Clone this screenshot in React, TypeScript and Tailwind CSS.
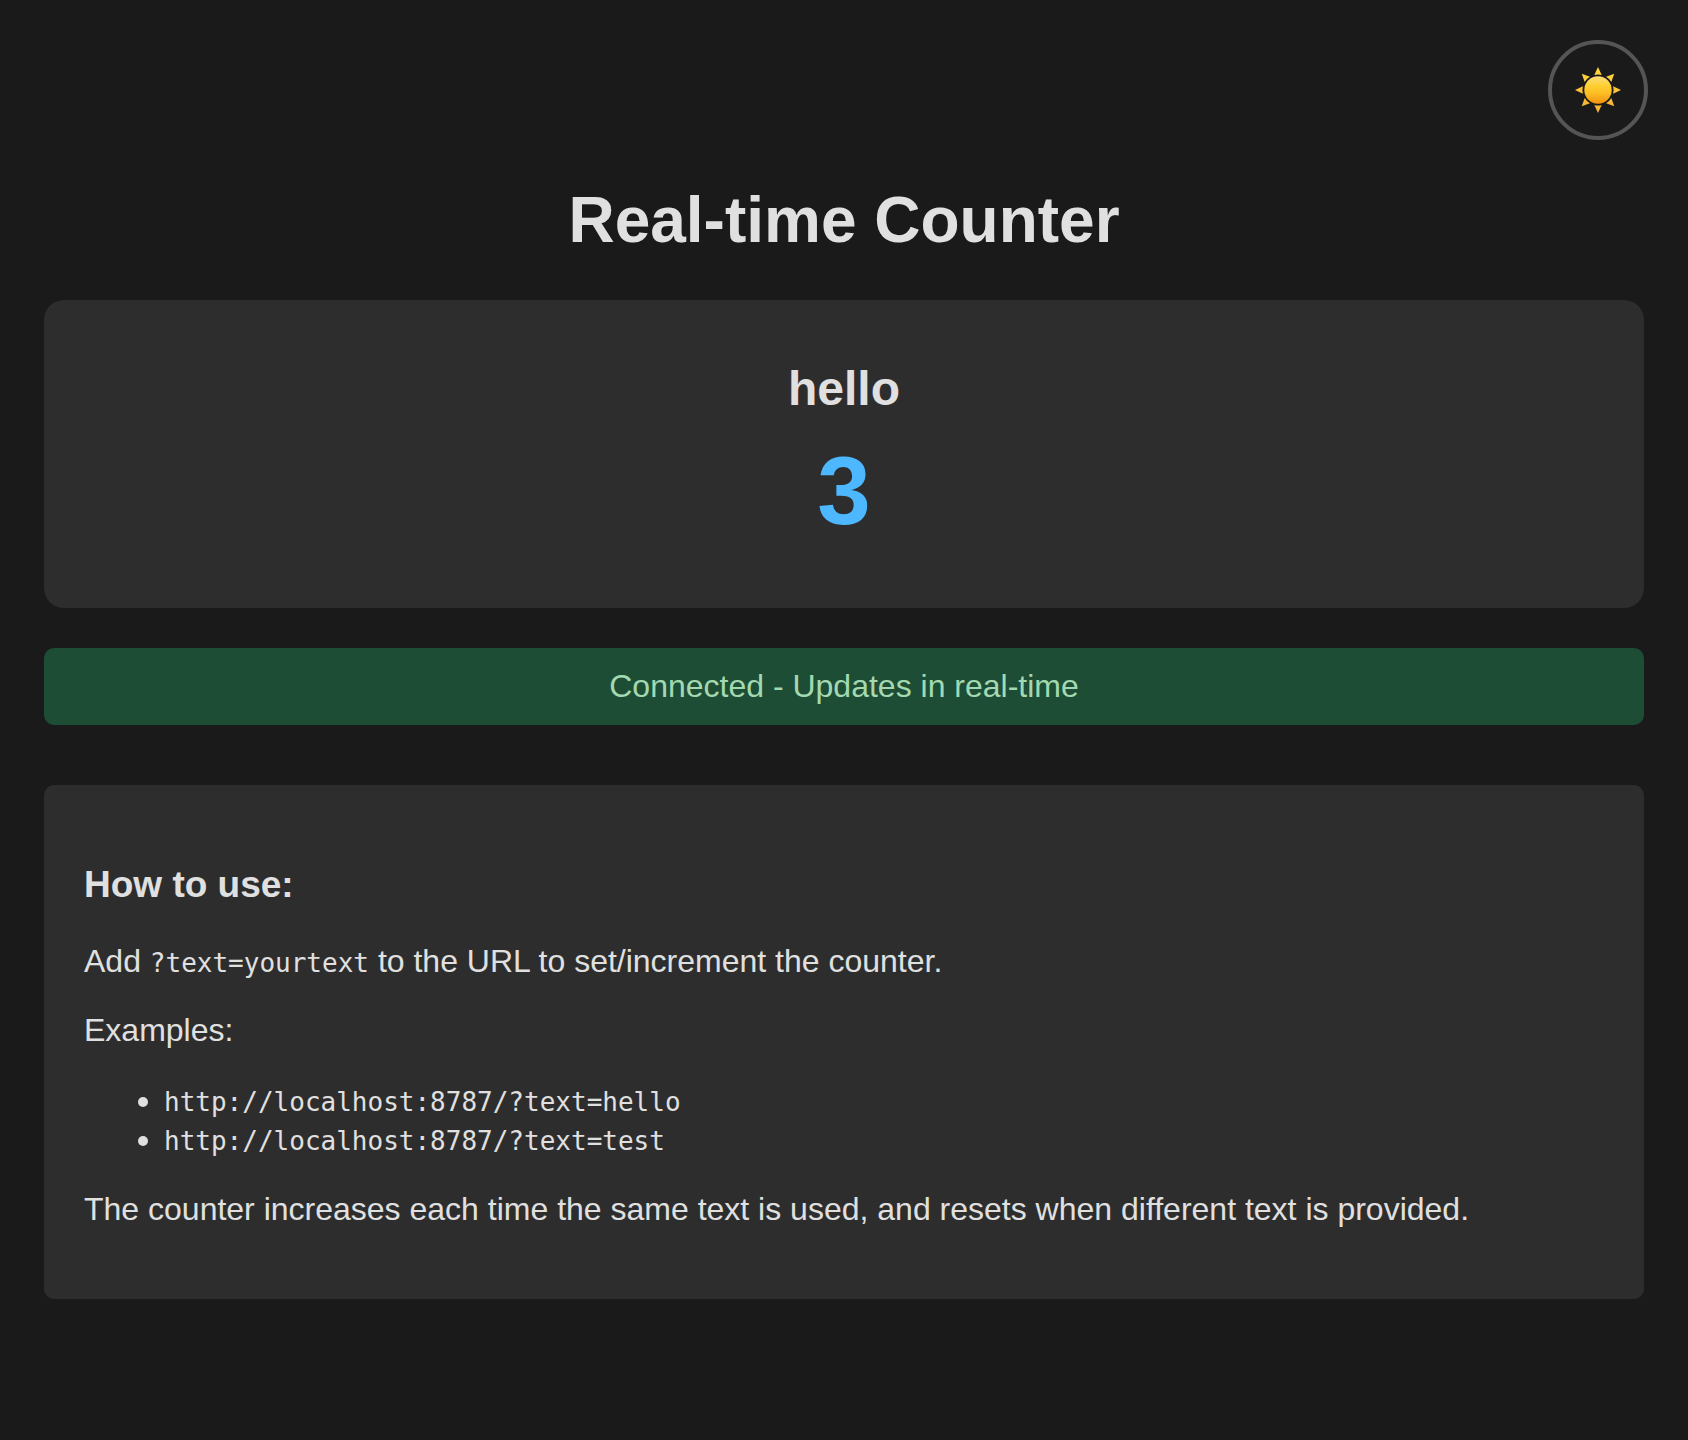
import { useState } from "react";

const rays = [0, 45, 90, 135, 180, 225, 270, 315];

function Sun() {
  return (
    <svg viewBox="0 0 48 48" className="size-12" aria-hidden="true">
      <defs>
        <linearGradient id="disc" x1="0" y1="0" x2="0" y2="1">
          <stop offset="0" stopColor="#fddc78" />
          <stop offset="0.15" stopColor="#fdd75c" />
          <stop offset="0.35" stopColor="#fecf30" />
          <stop offset="0.6" stopColor="#fdc024" />
          <stop offset="1" stopColor="#f3920f" />
        </linearGradient>
        <linearGradient id="rays" gradientUnits="userSpaceOnUse" x1="0" y1="1" x2="0" y2="47">
          <stop offset="0" stopColor="#ffd83c" />
          <stop offset="1" stopColor="#f9ae34" />
        </linearGradient>
        <clipPath id="ray-shape">
          {rays.map((a) => (
            <path key={a} d="M24 1 L27.7 8.9 Q24 7.9 20.3 8.9 Z" transform={`rotate(${a} 24 24)`} />
          ))}
        </clipPath>
      </defs>
      <rect width="48" height="48" fill="url(#rays)" clipPath="url(#ray-shape)" />
      <circle cx="24" cy="24" r="13.7" fill="url(#disc)" />
    </svg>
  );
}

const examples = ["http://localhost:8787/?text=hello", "http://localhost:8787/?text=test"];

export default function App() {
  const [count] = useState(3);
  return (
    <div className="min-h-screen bg-[#1a1a1a] px-11 pt-10 pb-10 font-['Liberation_Sans',Arial,sans-serif] text-[32px] leading-[37px] text-[#e0e0e0]">
      <header className="-mr-1 flex justify-end">
        <button type="button" aria-label="Toggle theme" className="flex size-[100px] items-center justify-center rounded-full border-4 border-[#555555]">
          <Sun />
        </button>
      </header>
      <main>
        <h1 className="mt-11 text-center text-[64px] leading-[72px] font-bold">Real-time Counter</h1>
        <section className="mt-11 flex flex-col items-center rounded-[20px] bg-[#2d2d2d] px-10 pt-15 pb-[62px] text-center">
          <h2 className="text-5xl leading-[58px] font-bold">hello</h2>
          <output className="mt-[18px] text-8xl leading-[110px] font-bold text-[#4db8ff]">{count}</output>
        </section>
        <p role="status" className="mt-10 rounded-[10px] bg-[#1e4d35] p-5 text-center text-[#a3d9b1]">Connected - Updates in real-time</p>
        <section className="mt-15 rounded-[10px] bg-[#2d2d2d] px-10 pt-[78px] pb-[71px]">
          <h3 className="text-[37px] leading-[43px] font-bold">How to use:</h3>
          <p className="mt-[37px]">
            Add <code className="font-['DejaVu_Sans_Mono',monospace] text-[26px] leading-none">?text=yourtext</code> to the URL to set/increment the counter.
          </p>
          <p className="mt-8">Examples:</p>
          <ul className="mt-8 list-disc pl-20 leading-[39px]">
            {examples.map((url) => (
              <li key={url}>
                <code className="font-['DejaVu_Sans_Mono',monospace] text-[26px] leading-none">{url}</code>
              </li>
            ))}
          </ul>
          <p className="mt-8">The counter increases each time the same text is used, and resets when different text is provided.</p>
        </section>
      </main>
    </div>
  );
}
